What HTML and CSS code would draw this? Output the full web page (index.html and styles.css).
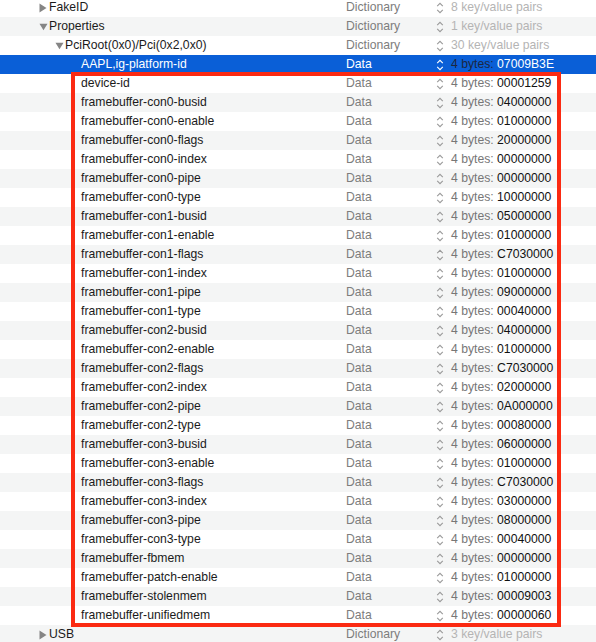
FILE: index.html
```html
<!DOCTYPE html>
<html lang="en">
<head>
    <meta charset="UTF-8">
    <meta name="viewport" content="width=device-width, initial-scale=1.0">
    <title>Plist Editor</title>
    <link rel="stylesheet" href="styles.css">
</head>
<body>
    <div class="outline">
        <div id="rows"></div>

        <!-- highlight around the framebuffer patch -->
        <div class="mark"></div>
    </div>

    <svg width="0" height="0" style="position:absolute">
        <symbol id="tri-right" viewBox="0 0 8 10"><path d="M0.5 0.5 L7.5 5 L0.5 9.5 Z"/></symbol>
        <symbol id="tri-down" viewBox="0 0 10 8"><path d="M0.5 0.5 L9.5 0.5 L5 7.5 Z"/></symbol>
        <symbol id="stepper" viewBox="0 0 8 12"><path d="M1.2 4.2 L4 1.4 L6.8 4.2 M1.2 7.8 L4 10.6 L6.8 7.8" fill="none" stroke-width="1.1"/></symbol>
    </svg>

    <script>
        // key, level, type, value, toggle ('open' / 'closed' / '')
        var rows = [
            ['FakeID', 1, 'Dictionary', '8 key/value pairs', 'closed'],
            ['Properties', 1, 'Dictionary', '1 key/value pairs', 'open'],
            ['PciRoot(0x0)/Pci(0x2,0x0)', 2, 'Dictionary', '30 key/value pairs', 'open'],
            ['AAPL,ig-platform-id', 3, 'Data', '07009B3E', ''],
            ['device-id', 3, 'Data', '00001259', ''],
            ['framebuffer-con0-busid', 3, 'Data', '04000000', ''],
            ['framebuffer-con0-enable', 3, 'Data', '01000000', ''],
            ['framebuffer-con0-flags', 3, 'Data', '20000000', ''],
            ['framebuffer-con0-index', 3, 'Data', '00000000', ''],
            ['framebuffer-con0-pipe', 3, 'Data', '00000000', ''],
            ['framebuffer-con0-type', 3, 'Data', '10000000', ''],
            ['framebuffer-con1-busid', 3, 'Data', '05000000', ''],
            ['framebuffer-con1-enable', 3, 'Data', '01000000', ''],
            ['framebuffer-con1-flags', 3, 'Data', 'C7030000', ''],
            ['framebuffer-con1-index', 3, 'Data', '01000000', ''],
            ['framebuffer-con1-pipe', 3, 'Data', '09000000', ''],
            ['framebuffer-con1-type', 3, 'Data', '00040000', ''],
            ['framebuffer-con2-busid', 3, 'Data', '04000000', ''],
            ['framebuffer-con2-enable', 3, 'Data', '01000000', ''],
            ['framebuffer-con2-flags', 3, 'Data', 'C7030000', ''],
            ['framebuffer-con2-index', 3, 'Data', '02000000', ''],
            ['framebuffer-con2-pipe', 3, 'Data', '0A000000', ''],
            ['framebuffer-con2-type', 3, 'Data', '00080000', ''],
            ['framebuffer-con3-busid', 3, 'Data', '06000000', ''],
            ['framebuffer-con3-enable', 3, 'Data', '01000000', ''],
            ['framebuffer-con3-flags', 3, 'Data', 'C7030000', ''],
            ['framebuffer-con3-index', 3, 'Data', '03000000', ''],
            ['framebuffer-con3-pipe', 3, 'Data', '08000000', ''],
            ['framebuffer-con3-type', 3, 'Data', '00040000', ''],
            ['framebuffer-fbmem', 3, 'Data', '00000000', ''],
            ['framebuffer-patch-enable', 3, 'Data', '01000000', ''],
            ['framebuffer-stolenmem', 3, 'Data', '00009003', ''],
            ['framebuffer-unifiedmem', 3, 'Data', '00000060', ''],
            ['USB', 1, 'Dictionary', '3 key/value pairs', 'closed']
        ];

        var html = '';
        rows.forEach(function (r, i) {
            var cls = 'row level-' + r[1];
            if (i === 3) cls += ' selected';

            var toggle = '<span class="toggle">';
            if (r[4] === 'closed') toggle += '<svg class="tri tri-right"><use href="#tri-right"/></svg>';
            if (r[4] === 'open') toggle += '<svg class="tri tri-down"><use href="#tri-down"/></svg>';
            toggle += '</span>';

            var value;
            if (r[2] === 'Data') {
                value = '<span class="bytes">4 bytes: </span><span class="hex">' + r[3] + '</span>';
            } else {
                value = '<span class="count">' + r[3] + '</span>';
            }

            html += '<div class="' + cls + '">' +
                '<div class="key">' + toggle + '<span class="name">' + r[0] + '</span></div>' +
                '<div class="type">' + r[2] + '</div>' +
                '<div class="step"><svg class="stepper"><use href="#stepper"/></svg></div>' +
                '<div class="value">' + value + '</div>' +
                '</div>';
        });
        document.getElementById('rows').innerHTML = html;
    </script>
</body>
</html>
```

FILE: styles.css
```css
/* Page */
body {
    margin: 0;
    background-color: #ffffff;
    font-family: "Liberation Sans", Arial, sans-serif;
    font-size: 12.2px;
    color: #1b1b1b;
    overflow: hidden;
}

.outline {
    position: relative;
    margin-top: -2px;
}

/* Rows */
.row {
    display: grid;
    grid-template-columns: 346px 90px 15px 1fr;
    height: 19px;
    line-height: 19px;
    white-space: nowrap;
}

.row:nth-child(even) {
    background-color: #f4f5f5;
}

.row.selected {
    background-color: #0a5fd7;
    color: #ffffff;
}

.key {
    display: flex;
    align-items: center;
}

.level-1 .key { padding-left: 39px; }
.level-2 .key { padding-left: 55px; }
.level-3 .key { padding-left: 71px; }

.toggle {
    width: 10px;
    height: 19px;
    display: flex;
    align-items: center;
}

.tri {
    fill: #858585;
}

.tri-right {
    width: 8px;
    height: 10px;
}

.tri-down {
    width: 9px;
    height: 8px;
}

.type {
    color: #7d7d7d;
}

.selected .type {
    color: #ffffff;
}

.step {
    display: flex;
    align-items: center;
}

.stepper {
    width: 8px;
    height: 12px;
    stroke: #9a9a9a;
}

.selected .stepper {
    stroke: #ffffff;
}

/* Values */
.bytes {
    color: #777777;
}

.hex {
    color: #111111;
}

.count {
    color: #b4b4b4;
}

.selected .bytes {
    color: #1c2740;
}

.selected .hex {
    color: #ffffff;
}

/* Red box around the patch */
.mark {
    position: absolute;
    left: 71px;
    top: 74px;
    width: 482px;
    height: 547px;
    border: 4px solid #fb2a12;
}
```
